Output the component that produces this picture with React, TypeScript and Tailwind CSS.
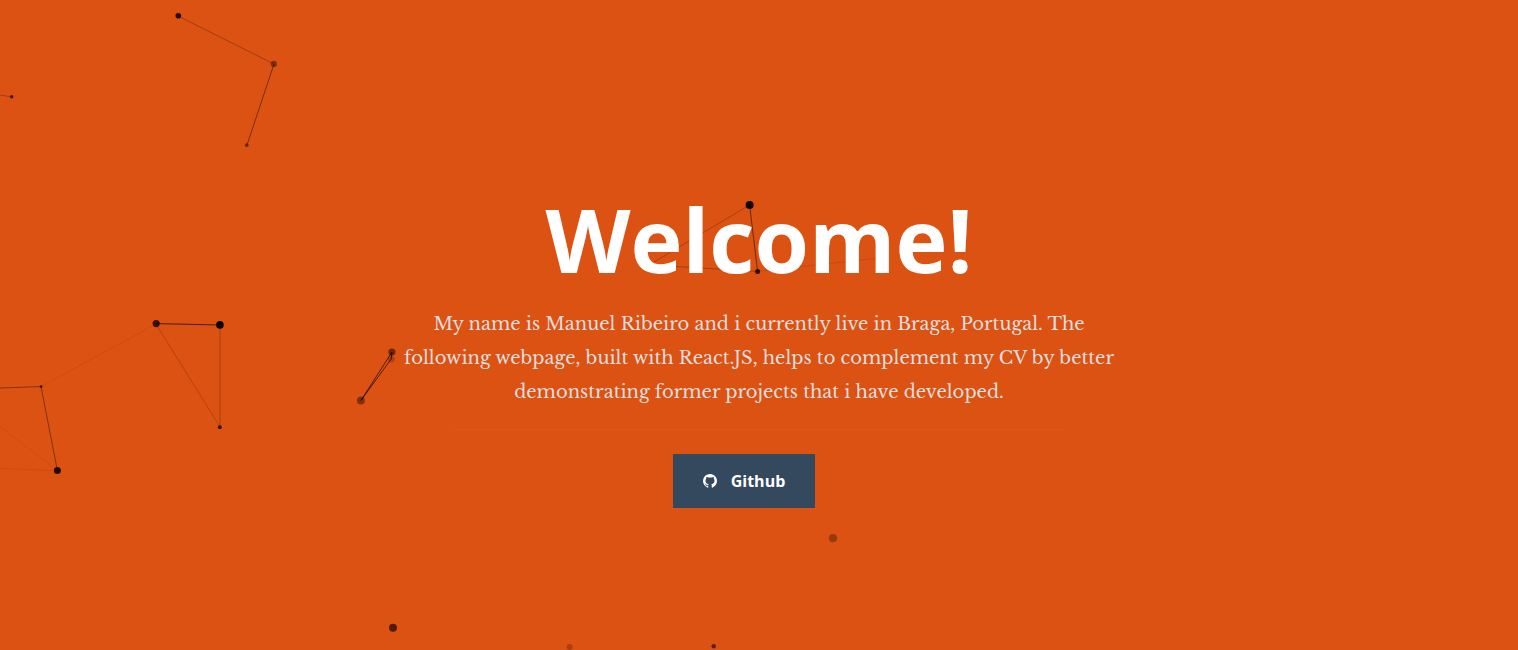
type Particle = { x: number; y: number; r: number; o: number };
type Link = { from: [number, number]; to: [number, number]; o: number };

const particles: Particle[] = [
  { x: 178.3, y: 15.7, r: 2.8, o: 0.85 },
  { x: 273.8, y: 63.9, r: 3.1, o: 0.42 },
  { x: 246.7, y: 145.2, r: 1.9, o: 0.5 },
  { x: 11.7, y: 96.8, r: 1.7, o: 0.7 },
  { x: 156.2, y: 323.6, r: 3.6, o: 0.75 },
  { x: 219.9, y: 324.9, r: 3.8, o: 0.98 },
  { x: 219.8, y: 427.2, r: 2, o: 0.75 },
  { x: 41.1, y: 386.6, r: 1.4, o: 0.7 },
  { x: 57.4, y: 470.6, r: 3.5, o: 0.85 },
  { x: 391.9, y: 352, r: 3.6, o: 0.5 },
  { x: 391.2, y: 359, r: 3.5, o: 0.2 },
  { x: 360.9, y: 400.4, r: 4, o: 0.4 },
  { x: 749.6, y: 205, r: 4, o: 0.92 },
  { x: 757.6, y: 271.4, r: 2.5, o: 0.8 },
  { x: 833, y: 538.2, r: 4.1, o: 0.3 },
  { x: 393, y: 627.8, r: 4, o: 0.65 },
  { x: 569.7, y: 647, r: 3, o: 0.22 },
  { x: 713.7, y: 646.2, r: 2.2, o: 0.6 },
];

const links: Link[] = [
  { from: [178, 16], to: [274, 64], o: 0.28 },
  { from: [274, 64], to: [247, 145], o: 0.45 },
  { from: [0, 95], to: [12, 97], o: 0.25 },
  { from: [156, 323.6], to: [220, 325], o: 0.65 },
  { from: [156, 324], to: [220, 427], o: 0.17 },
  { from: [220, 325], to: [220, 427], o: 0.24 },
  { from: [156, 324], to: [41, 386.6], o: 0.07 },
  { from: [0, 388], to: [41, 386.6], o: 0.4 },
  { from: [41, 386.6], to: [57.4, 470.6], o: 0.4 },
  { from: [0, 426.5], to: [57.4, 470.6], o: 0.07 },
  { from: [0, 468.5], to: [57.4, 470.6], o: 0.07 },
  { from: [392, 352], to: [361, 400.4], o: 0.65 },
  { from: [391.2, 359], to: [361, 400.4], o: 0.65 },
  { from: [392, 352], to: [391.2, 359], o: 0.75 },
  { from: [749.6, 205], to: [757.6, 271.4], o: 0.5 },
  { from: [749.6, 205], to: [654, 262], o: 0.22 },
  { from: [757.6, 271.4], to: [676, 266.5], o: 0.25 },
  { from: [757.6, 271.4], to: [889, 257], o: 0.1 },
];

function ParticleField() {
  return (
    <svg aria-hidden="true" className="absolute inset-0 h-full w-full">
      {links.map((l, i) => (
        <line
          key={i}
          x1={l.from[0]}
          y1={l.from[1]}
          x2={l.to[0]}
          y2={l.to[1]}
          stroke="#000"
          strokeOpacity={l.o}
        />
      ))}
      {particles.map((p, i) => (
        <circle key={i} cx={p.x} cy={p.y} r={p.r} fill="#000" fillOpacity={p.o} />
      ))}
    </svg>
  );
}

function GithubIcon() {
  return (
    <svg aria-hidden="true" viewBox="128 128 1536 1536" className="h-3.5 w-3.5" fill="currentColor">
      <path d="M1664 896q0 251-146.5 451.5t-378.5 277.5q-27 5-40-7t-13-30q0-3 .5-76.5t.5-134.5q0-97-52-142 57-6 102.5-18t94-39 81-66.5 53-105 20.5-150.5q0-119-79-206 37-91-8-204-28-9-81 11t-92 44l-38 24q-93-26-192-26t-192 26q-16-11-42.5-27t-83.5-38.5-85-13.5q-45 113-8 204-79 87-79 206 0 85 20.5 150t52.5 105 80.5 67 94 39 102.5 18q-39 36-49 103-21 10-45 15t-57 5-65.5-21.5-55.5-62.5q-19-32-48.5-52t-49.5-24l-20-3q-21 0-29 4.5t-5 11.5 9 14 13 12l7 5q22 10 43.5 38t31.5 51l10 23q13 38 44 61.5t67 30 69.5 7 55.5-3.5l23-4q0 38 .5 88.5t.5 54.5q0 18-13 30t-40 7q-232-77-378.5-277.5t-146.5-451.5q0-209 103-385.5t279.5-279.5 385.5-103 385.5 103 279.5 279.5 103 385.5z" />
    </svg>
  );
}

export default function App() {
  return (
    <header className="relative flex min-h-screen flex-col items-center justify-center overflow-hidden bg-[#dc5213] px-6 pt-12 text-center">
      <ParticleField />
      <div className="relative flex w-full max-w-3xl flex-col items-center">
        <h1 className="mb-5 font-['Open_Sans',sans-serif] text-[88px] leading-[96px] font-bold text-white">
          Welcome!
        </h1>
        <p className="mb-5 w-full max-w-[720px] font-['Libre_Baskerville','Liberation_Serif',serif] text-[18px] leading-[34px] text-[#dddddd]">
          My name is Manuel Ribeiro and i currently live in Braga, Portugal. The following webpage,
          built with React.JS, helps to complement my CV by better demonstrating former projects
          that i have developed.
        </p>
        <hr className="mb-6 w-4/5 border-t border-[#d9581f]" />
        <a
          href="https://github.com"
          className="mr-[30px] flex h-[54px] items-center gap-3.5 bg-[#34495e] px-[30px] font-['Open_Sans',sans-serif] text-base font-bold text-white"
        >
          <GithubIcon />
          Github
        </a>
      </div>
    </header>
  );
}
